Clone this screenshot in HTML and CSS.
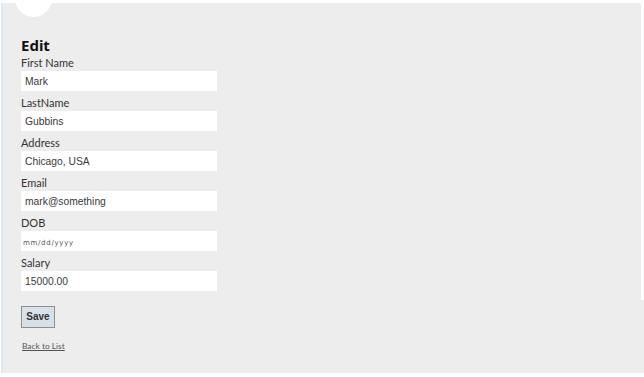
FILE: index.html
```html
<!DOCTYPE html>
<html>
<head>
<meta charset="utf-8">
<link rel="stylesheet" href="styles.css">
</head>
<body>
<div class="frame">
  <div class="panel">
    <div class="avatar"></div>
    <span class="edge"></span>
    <h2 class="title">Edit</h2>
    <form class="form">
      <div class="group">
        <label class="label">First Name</label>
        <input class="field" type="text" value="Mark">
      </div>
      <div class="group">
        <label class="label">LastName</label>
        <input class="field" type="text" value="Gubbins">
      </div>
      <div class="group">
        <label class="label">Address</label>
        <input class="field" type="text" value="Chicago, USA">
      </div>
      <div class="group">
        <label class="label">Email</label>
        <input class="field" type="text" value="mark@something">
      </div>
      <div class="group">
        <label class="label">DOB</label>
        <input class="field date" type="text" placeholder="mm/dd/yyyy">
      </div>
      <div class="group">
        <label class="label">Salary</label>
        <input class="field" type="text" value="15000.00">
      </div>
      <div class="actions">
        <button class="save" type="button">Save</button>
      </div>
    </form>
    <a class="back" href="#">Back to List</a>
  </div>
</div>
</body>
</html>
```
FILE: styles.css
```css
html, body {
  margin: 0;
  padding: 0;
  background: #ffffff;
}
.frame {
  width: 644px;
  height: 377px;
  box-sizing: border-box;
  padding: 3px 0 4px 1px;
  background: #ffffff;
}
.panel {
  position: relative;
  height: 370px;
  box-sizing: border-box;
  border-left: 2px solid #dde6f3;
  background: #ededed;
  padding: 34px 0 0 18px;
  overflow: hidden;
  font-family: Lato, "Noto Sans", sans-serif;
  color: #333333;
}
.avatar {
  position: absolute;
  left: 12px;
  top: -23px;
  width: 37px;
  height: 37px;
  border-radius: 50%;
  background: #ffffff;
}
.edge {
  position: absolute;
  right: 0;
  top: 0;
  width: 3px;
  height: 297px;
  background: #ffffff;
}
.title {
  margin: 0 0 2px 0;
  font-family: "Noto Sans", sans-serif;
  font-size: 15px;
  line-height: 16px;
  font-weight: 700;
  color: #111111;
}
.form {
  margin: 0;
}
.group {
  display: flex;
  flex-direction: column;
  align-items: flex-start;
  margin-bottom: 4px;
}
.label {
  font-size: 11px;
  line-height: 16px;
  color: #333333;
}
.field {
  width: 196px;
  height: 20px;
  box-sizing: border-box;
  margin-top: 0;
  border: none;
  background: #ffffff;
  padding: 0 0 0 4px;
  font-family: "Liberation Sans", Arial, sans-serif;
  font-size: 10.3px;
  color: #3a3a3a;
  outline: none;
}
.date::placeholder {
  font-family: "DejaVu Sans", sans-serif;
  font-size: 7px;
  letter-spacing: 0.7px;
  color: #555555;
}
.date {
  padding-left: 2px;
}
.actions {
  padding-top: 9px;
}
.save {
  width: 34px;
  height: 22px;
  box-sizing: border-box;
  padding: 0;
  margin: 0;
  border: 1px solid #8a8f94;
  background: #d9e1e8;
  font-family: "Liberation Sans", Arial, sans-serif;
  font-size: 10px;
  font-weight: 700;
  color: #333333;
}
.back {
  display: inline-block;
  margin-top: 13px;
  margin-left: 1px;
  font-size: 8.4px;
  line-height: 10px;
  color: #555555;
  text-decoration: underline;
}
```
